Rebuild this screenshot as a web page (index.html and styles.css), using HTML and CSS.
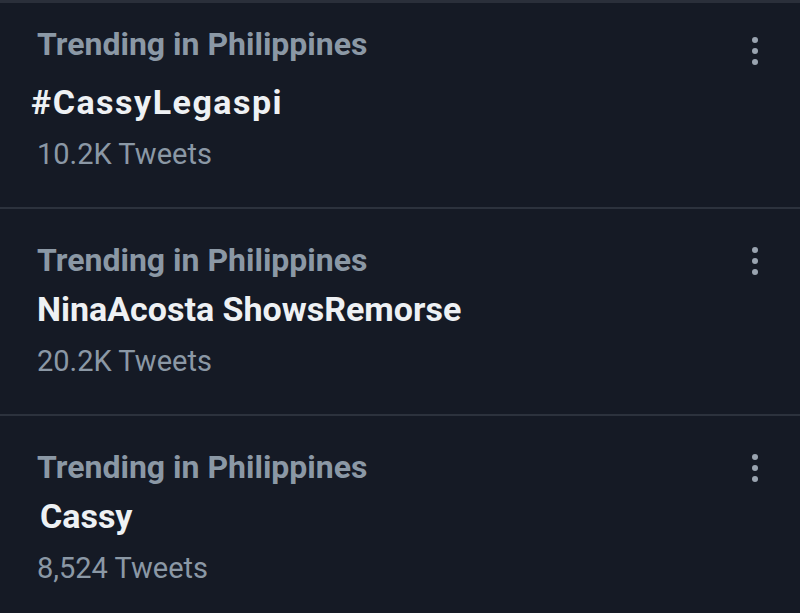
FILE: index.html
```html
<!DOCTYPE html>
<html lang="en">
<head>
  <meta charset="UTF-8" />
  <meta name="viewport" content="width=device-width, initial-scale=1.0"/>
  <title>Trends</title>
  <link rel="stylesheet" href="styles.css">
</head>
<body>
  <div class="trends">
    <div class="trend">
      <div class="trend-body">
        <div class="trend-category">Trending in Philippines</div>
        <div class="trend-title">#CassyLegaspi</div>
        <div class="trend-count">10.2K Tweets</div>
      </div>
      <svg class="trend-more" width="12" height="36" viewBox="0 0 12 36">
        <circle cx="6" cy="8" r="3" />
        <circle cx="6" cy="19" r="3" />
        <circle cx="6" cy="30" r="3" />
      </svg>
    </div>

    <div class="trend">
      <div class="trend-body">
        <div class="trend-category">Trending in Philippines</div>
        <div class="trend-title">NinaAcosta ShowsRemorse</div>
        <div class="trend-count">20.2K Tweets</div>
      </div>
      <svg class="trend-more" width="12" height="36" viewBox="0 0 12 36">
        <circle cx="6" cy="8" r="3" />
        <circle cx="6" cy="19" r="3" />
        <circle cx="6" cy="30" r="3" />
      </svg>
    </div>

    <div class="trend">
      <div class="trend-body">
        <div class="trend-category">Trending in Philippines</div>
        <div class="trend-title">Cassy</div>
        <div class="trend-count">8,524 Tweets</div>
      </div>
      <svg class="trend-more" width="12" height="36" viewBox="0 0 12 36">
        <circle cx="6" cy="8" r="3" />
        <circle cx="6" cy="19" r="3" />
        <circle cx="6" cy="30" r="3" />
      </svg>
    </div>
  </div>
</body>
</html>
```

FILE: styles.css
```css
html, body {
  height: 100%;
}

body {
  font-family: Roboto, 'Noto Sans', sans-serif;
  background-color: #151a25;
  margin: 0;
  overflow: hidden;
}

.trends {
  border-top: 3px solid #2a2f3a;
}

.trend {
  display: flex;
  justify-content: space-between;
  align-items: flex-start;
  padding: 33px 39px 33px 37px;
  border-bottom: 2px solid #2c323d;
}

.trend:first-child {
  padding-top: 23px;
}

.trend-category {
  font-size: 32px;
  line-height: 36px;
  font-weight: bold;
  color: #8b98a5;
}

.trend-title {
  margin-top: 9px;
  font-size: 34px;
  line-height: 44px;
  font-weight: bold;
  color: #eef1f4;
}

/* the hashtag row sits a little lower and runs wider */
.trend:first-child .trend-title {
  margin-top: 18px;
  margin-left: -6px;
  letter-spacing: 1.5px;
}

.trend:last-child .trend-title {
  margin-left: 3px;
}

.trend-count {
  margin-top: 10px;
  font-size: 29px;
  line-height: 40px;
  color: #8b98a5;
}

.trend-more {
  fill: #9aa4b0;
  flex-shrink: 0;
}

.trend:first-child .trend-more {
  margin-top: 6px;
}
```
